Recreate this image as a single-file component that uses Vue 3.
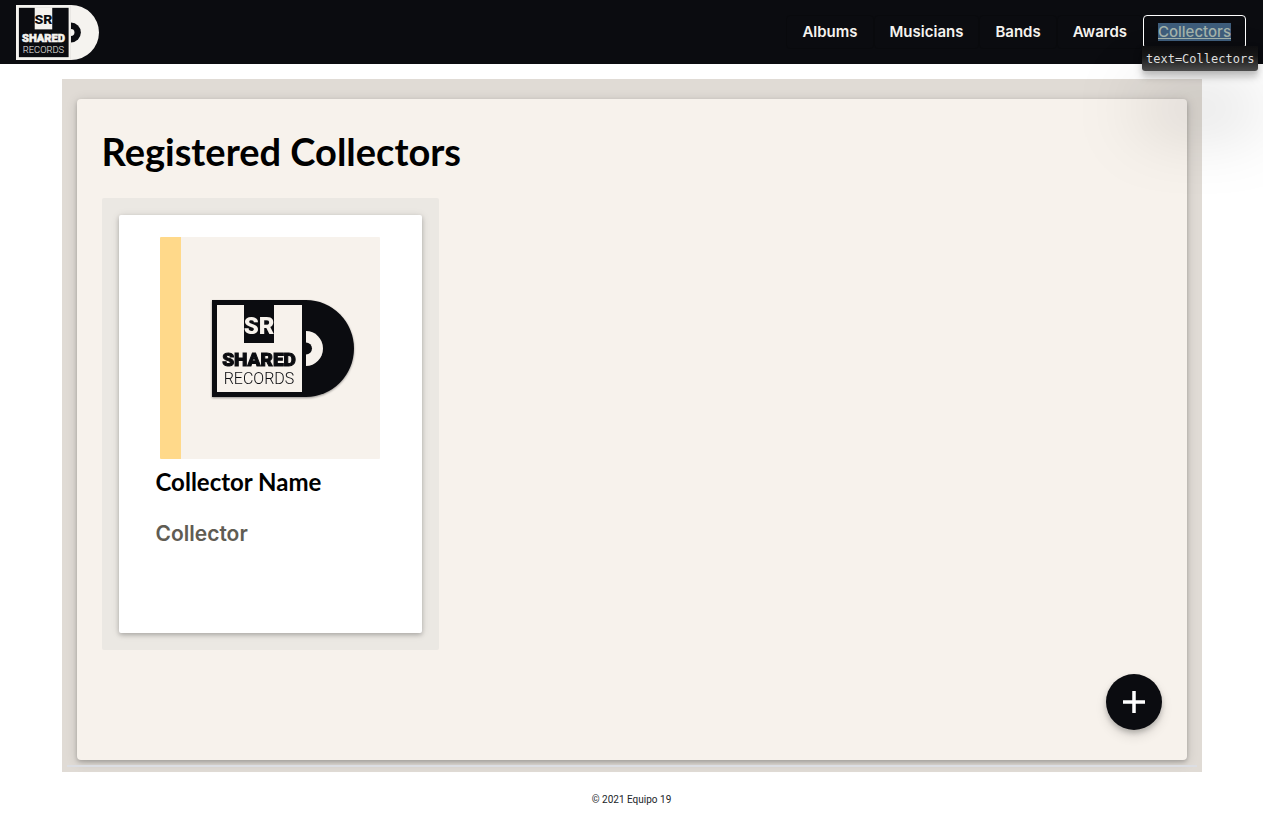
<script setup>
import { h } from 'vue'

const links = ['Albums', 'Musicians', 'Bands', 'Awards']
const collectors = [{ name: 'Collector Name', role: 'Collector' }]

const RecordLogo = ({ ink, paper }) => {
  const label = { x: 47, 'text-anchor': 'middle', 'font-family': 'Roboto, sans-serif' }
  return h('svg', { viewBox: '0 0 142 97', role: 'img', 'aria-label': 'Shared Records', preserveAspectRatio: 'none' }, [
    h('path', { d: 'M94 0a48 48.5 0 0 1 0 97z', fill: ink }),
    h('path', { d: 'M94 31a17 17.5 0 0 1 0 35z', fill: paper }),
    h('path', { d: 'M94 42.5a6 6 0 0 1 0 12z', fill: ink }),
    h('rect', { width: 94, height: 97, fill: ink }),
    h('rect', { x: 5, y: 5, width: 85, height: 87, fill: paper }),
    h('rect', { x: 32, y: 4, width: 30, height: 39, fill: ink }),
    h('text', { ...label, y: 34, 'font-size': 24, 'font-weight': 900, fill: paper }, 'SR'),
    h('text', { ...label, y: 66, 'font-size': 19, 'font-weight': 900, fill: ink, stroke: ink, 'stroke-width': 1 }, 'SHARED'),
    h('text', { ...label, y: 84, 'font-size': 16, 'font-weight': 300, fill: ink }, 'RECORDS'),
  ])
}
RecordLogo.props = ['ink', 'paper']
</script>

<template>
  <header class="topbar">
    <a href="#" class="brand"><RecordLogo class="brand-logo" ink="#f5f3ef" paper="#0b0c10" /></a>
    <nav class="menu">
      <a v-for="link in links" :key="link" href="#" class="menu-link">{{ link }}</a>
      <a href="#" class="menu-link current">
        <span class="marked">Collectors</span>
        <span class="tip">text=Collectors</span>
      </a>
    </nav>
  </header>

  <main class="page">
    <section class="panel">
      <h1>Registered Collectors</h1>
      <div class="list">
        <div v-for="item in collectors" :key="item.name" class="slot">
          <article class="card">
            <div class="cover"><RecordLogo class="cover-logo" ink="#0b0c10" paper="#f7f2ec" /></div>
            <h2>{{ item.name }}</h2>
            <p>{{ item.role }}</p>
          </article>
        </div>
      </div>
      <div class="actions">
        <button type="button" class="add" aria-label="Add collector">
          <svg viewBox="0 0 24 24" width="24" height="24"><path d="M12 1v22M1 12h22" stroke="#fff" stroke-width="3.5" /></svg>
        </button>
      </div>
    </section>
    <hr>
  </main>

  <footer>© 2021 Equipo 19</footer>
</template>

<style>
body {
  background: #fff;
}
</style>

<style scoped>
* {
  box-sizing: border-box;
}
.topbar {
  display: flex;
  align-items: center;
  justify-content: space-between;
  height: 64px;
  padding: 0 17px 0 16px;
  background: #0b0c10;
}
.brand-logo {
  display: block;
  width: 83px;
  height: 55px;
}
.menu {
  display: flex;
  align-items: center;
}
.menu-link {
  position: relative;
  height: 34px;
  padding: 0 15px;
  border: 1px solid #090a0d;
  border-radius: 4px;
  font: 600 15px/32px Inter, sans-serif;
  color: #f5f3ef;
  text-decoration: none;
}
.current {
  padding: 0 14px;
  border-color: #fff;
}
.marked {
  display: inline-block;
  line-height: 18px;
  background: #3e5d7b;
  color: #a3b2aa;
  font-weight: 500;
  text-decoration: underline;
}
.tip {
  position: absolute;
  z-index: 2;
  top: 30px;
  left: -2px;
  height: 25px;
  padding: 0 4px;
  border-radius: 1px 1px 3px 3px;
  background: linear-gradient(#0e0e10, #171717 40%, #4c4c4c);
  box-shadow: 0 3px 2px rgba(0, 0, 0, 0.03), 0 7px 5px rgba(0, 0, 0, 0.05), 0 5px 10px rgba(0, 0, 0, 0.2), 0 50px 70px rgba(0, 0, 0, 0.25);
  font: 12px/26px "DejaVu Sans Mono", monospace;
  color: #ddd;
  white-space: nowrap;
}
.page {
  max-width: 1140px;
  margin: 15px auto 0;
  padding: 20px 15px 0;
  background: #e0dbd5;
}
.panel {
  min-height: 661px;
  padding: 24px 25px;
  border-radius: 4px;
  background: #f7f2ec;
  box-shadow: 0 2px 4px rgba(0, 0, 0, 0.2), 0 2px 12px rgba(0, 0, 0, 0.15);
}
h1 {
  margin: 0 0 19px;
  font: 700 38px/56px Lato, sans-serif;
  color: #000;
}
.list {
  display: grid;
  grid-template-columns: repeat(auto-fill, 337px);
}
.slot {
  padding: 17px;
  background: #ebe8e3;
  border-radius: 2px;
}
.card {
  min-height: 418px;
  padding: 22px 37px;
  border-radius: 2px;
  background: #fff;
  box-shadow: 0 2px 4px rgba(0, 0, 0, 0.2), 0 1px 8px rgba(0, 0, 0, 0.12);
}
.cover {
  display: flex;
  align-items: center;
  justify-content: center;
  width: 220px;
  height: 222px;
  margin: 0 4px;
  padding-left: 6px;
  border-left: 21px solid #ffd98a;
  border-radius: 1px;
  background: #f7f2ec;
}
.cover-logo {
  width: 142px;
  height: 97px;
  filter: drop-shadow(0 1px 1px rgba(0, 0, 0, 0.4));
}
h2 {
  margin: 7px 0 21px;
  font: 700 24px/32px Lato, sans-serif;
  color: #000;
}
p {
  margin: 0;
  font: 600 21px/30px Inter, sans-serif;
  color: #605c53;
}
.actions {
  display: flex;
  justify-content: flex-end;
  margin-top: 24px;
}
.add {
  display: flex;
  align-items: center;
  justify-content: center;
  width: 56px;
  height: 56px;
  padding: 0;
  border: 0;
  border-radius: 50%;
  background: #0b0c10;
  box-shadow: 0 3px 5px rgba(0, 0, 0, 0.2), 0 6px 12px rgba(0, 0, 0, 0.12);
}
hr {
  height: 2px;
  margin: 5px -10px 0;
  border: 0;
  background: #dcdee3;
}
.page::after {
  content: "";
  display: block;
  height: 5px;
}
footer {
  padding: 20px 0;
  font: 10px/16px Roboto, sans-serif;
  color: #212529;
  text-align: center;
}
</style>
